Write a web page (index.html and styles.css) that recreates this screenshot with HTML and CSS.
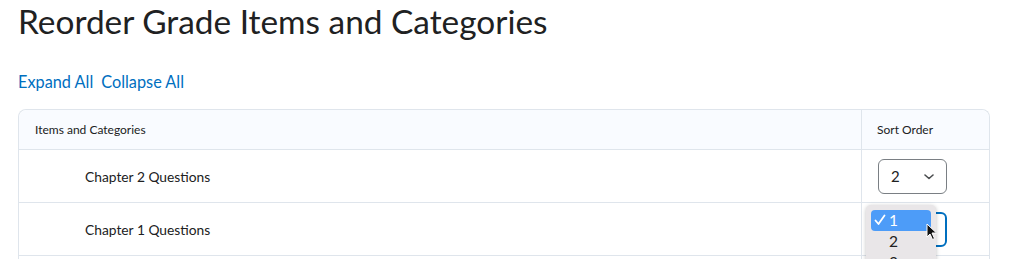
FILE: index.html
```html
<!DOCTYPE html>
<html>
<head>
<meta charset="utf-8">
<link rel="stylesheet" href="styles.css">
</head>
<body>
<div class="page">
  <h1 class="title">Reorder Grade Items and Categories</h1>
  <div class="links"><a class="link">Expand All</a><a class="link">Collapse All</a></div>
  <div class="table">
    <div class="row head">
      <div class="c1">Items and Categories</div>
      <div class="c2">Sort Order</div>
    </div>
    <div class="row">
      <div class="c1 name">Chapter 2 Questions</div>
      <div class="c2"><div class="select"><span>2</span><svg class="chev" width="10" height="6" viewBox="0 0 10 6"><path d="M1 1 L5 4.5 L9 1" fill="none" stroke="#494c4e" stroke-width="1.6" stroke-linecap="round" stroke-linejoin="round"/></svg></div></div>
    </div>
    <div class="row">
      <div class="c1 name">Chapter 1 Questions</div>
      <div class="c2 anchor">
        <div class="select focus"><span>1</span><svg class="chev" width="10" height="6" viewBox="0 0 10 6"><path d="M1 1 L5 4.5 L9 1" fill="none" stroke="#494c4e" stroke-width="1.6" stroke-linecap="round" stroke-linejoin="round"/></svg></div>
        <div class="popup">
          <div class="opt sel"><svg class="check" width="12" height="12" viewBox="0 0 12 12"><path d="M1.5 6.5 L4.5 10 L10.5 1.5" fill="none" stroke="#fff" stroke-width="1.8" stroke-linecap="round" stroke-linejoin="round"/></svg>1</div>
          <div class="opt">2</div>
          <div class="opt">3</div>
        </div>
        <svg class="cursor" width="12" height="18" viewBox="0 0 12 18"><path d="M1 1 L1 14 L4 11 L6.5 16.5 L8.5 15.5 L6 10 L10.5 10 Z" fill="#111" stroke="#fff" stroke-width="1"/></svg>
      </div>
    </div>
    <div class="row">
      <div class="c1 name"></div>
      <div class="c2"></div>
    </div>
  </div>
</div>
</body>
</html>
```
FILE: styles.css
```css
html, body {
  margin: 0;
  padding: 0;
  background: #fff;
  overflow: hidden;
}
.page {
  padding: 0 34px 0 18px;
  font-family: Lato, "Open Sans", sans-serif;
  color: #202122;
}
.title {
  margin: 0;
  padding-top: 0;
  font-size: 33.4px;
  font-weight: 400;
  line-height: 42px;
}
.links {
  margin-top: 30px;
  display: flex;
  gap: 8px;
  font-size: 16.3px;
  line-height: 20px;
}
.link {
  color: #006fbf;
}
.table {
  margin-top: 17px;
  width: 972px;
  border: 1px solid #dfe5ec;
  border-bottom: none;
  border-radius: 8px 8px 0 0;
  box-sizing: border-box;
}
.row {
  display: flex;
  height: 52px;
  border-bottom: 1px solid #dfe5ec;
}
.row.head {
  height: 39px;
  background: #f9fbff;
  border-radius: 8px 8px 0 0;
  font-size: 12px;
}
.c1 {
  width: 843px;
  border-right: 1px solid #dfe5ec;
  display: flex;
  align-items: center;
  padding-left: 16px;
  box-sizing: border-box;
}
.c2 {
  flex: 1;
  display: flex;
  align-items: center;
  padding-left: 16px;
  box-sizing: border-box;
}
.head .c2 {
  padding-left: 15px;
}
.name {
  padding-left: 66px;
  font-size: 13.8px;
}
.select {
  width: 69px;
  height: 35px;
  box-sizing: border-box;
  border: 1px solid #7a7f84;
  border-radius: 6px;
  display: flex;
  align-items: center;
  justify-content: space-between;
  padding: 0 12px 0 12px;
  font-size: 15px;
  background: #fff;
}
.select.focus {
  border: 2px solid #006fbf;
  padding: 0 11px;
}
.chev {
  margin-top: 1px;
}
.anchor {
  position: relative;
}
.popup {
  position: absolute;
  left: 4px;
  top: 2px;
  width: 70px;
  height: 60px;
  background: #e9e6e8;
  border-radius: 5px;
  box-shadow: 0 1px 4px rgba(0,0,0,0.25);
  padding: 5px 5px 0 5px;
  box-sizing: border-box;
  font-size: 15.5px;
}
.opt {
  height: 21px;
  line-height: 21px;
  padding-left: 18px;
  position: relative;
  color: #222;
}
.opt.sel {
  background: #4d9cf8;
  color: #fff;
  border-radius: 4px;
  padding-left: 18px;
}
.check {
  position: absolute;
  left: 3px;
  top: 4px;
}
.cursor {
  position: absolute;
  left: 64px;
  top: 20px;
}
```
